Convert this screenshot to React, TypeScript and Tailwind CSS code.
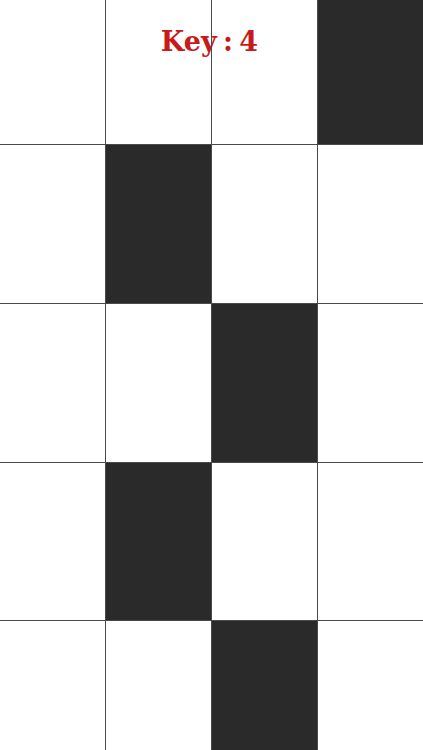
import React from "react";

const black: Record<number, number> = { 0: 3, 1: 1, 2: 2, 3: 1, 4: 2 };

export default function App() {
  const rows = [0, 1, 2, 3, 4];
  const cols = [0, 1, 2, 3];
  return (
    <div className="relative w-[423px] h-[750px] overflow-hidden bg-white">
      <div className="grid grid-cols-[105px_105px_105px_105px] grid-rows-[144px_158px_158px_157px_130px] gap-px bg-[#4a4a4a] w-[423px]">
        {rows.map((r) =>
          cols.map((c) => (
            <div
              key={`${r}-${c}`}
              className={black[r] === c ? "bg-[#2a2a2a]" : "bg-white"}
            />
          ))
        )}
      </div>
      <div className="absolute top-[24px] left-0 w-[419px] flex justify-center">
        <span
          className="text-[27px] font-bold text-[#c81a1a] leading-none pt-[4px] [word-spacing:-3px]"
          style={{ fontFamily: '"DejaVu Serif", "Liberation Serif", serif' }}
        >
          Key : 4
        </span>
      </div>
      <div className="absolute top-0 left-[211px] w-px h-[144px] bg-[#4a4a4a]" />
    </div>
  );
}
